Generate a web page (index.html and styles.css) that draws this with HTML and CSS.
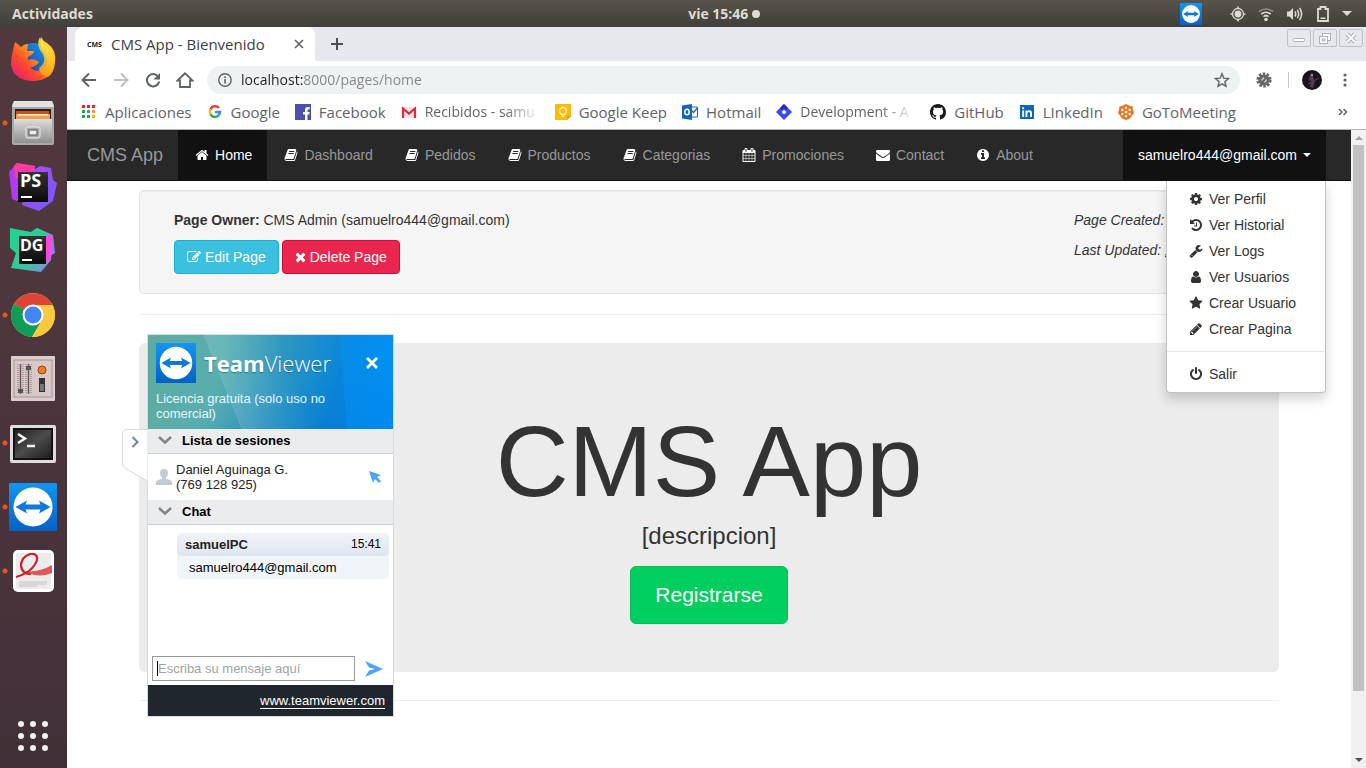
FILE: index.html
```html
<!DOCTYPE html>
<html lang="es">
<head>
<meta charset="utf-8">
<title>CMS App - Bienvenido</title>
<link rel="stylesheet" href="styles.css">
</head>
<body>
<svg class="defs" aria-hidden="true">
  <defs>
    <linearGradient id="tvBlue" x1="0" y1="0" x2="0" y2="1"><stop offset="0" stop-color="#1296f0"/><stop offset="1" stop-color="#0560c8"/></linearGradient>
    <symbol id="teamviewer" viewBox="0 0 48 48"><rect width="48" height="48" rx="1" fill="url(#tvBlue)"/><circle cx="24" cy="24" r="19.500" fill="#fff"/><path d="M6.500 24 18 17.500 16.500 21.500h15L30 17.500 41.500 24 30 30.500l1.500-4h-15l1.500 4z" fill="#0f78d8"/></symbol>
    <symbol id="home" viewBox="0 0 1792 1792"><path d="M1472 992v480q0 26-19 45t-45 19h-384v-384h-256v384h-384q-26 0-45-19t-19-45v-480q0-1 .5-3t.5-3l575-474 575 474q1 2 1 6zm223-69l-62 74q-8 9-21 11h-3q-13 0-21-7l-692-577-692 577q-12 8-24 7-13-2-21-11l-62-74q-8-10-7-23.500t11-21.500l719-599q32-26 76-26t76 26l244 204v-195q0-14 9-23t23-9h192q14 0 23 9t9 23v408l219 182q10 8 11 21.500t-7 23.500z"/></symbol>
    <symbol id="book" viewBox="0 0 1792 1792"><path d="M1703 478q40 57 18 129l-275 906q-19 64-76.500 107.500t-122.500 43.500h-923q-77 0-148.500-53.500t-99.500-131.500q-24-67-2-127 0-4 3-27t4-37q1-8-3-21.500t-3-19.500q2-11 8-21t16.500-23.500 16.500-23.500q23-38 45-91.500t30-91.500q3-10 .5-30t-.5-28q3-11 17-28t17-23q21-36 42-92t25-90q1-9-2.500-32t.5-28q4-13 22-30.500t22-22.500q19-26 42.500-84.500t27.500-96.500q1-8-3-25.500t-2-26.500q2-8 9-18t18-23 17-21q8-12 16.500-30.500t15-35 16-36 19.500-32 26.500-23.500 36-11.500 47.500 5.500l-1 3q38-9 51-9h761q74 0 114 56t18 130l-274 906q-36 119-71.500 153.500t-128.500 34.500h-869q-27 0-38 15-11 16-1 43 24 70 144 70h923q29 0 56-15.500t35-41.500l300-987q7-22 5-57 38 15 59 43zm-1064 2q-4 13 2 22.500t20 9.500h608q13 0 25.500-9.500t16.500-22.500l21-64q4-13-2-22.500t-20-9.500h-608q-13 0-25.500 9.500t-16.500 22.500zm-83 256q-4 13 2 22.500t20 9.500h608q13 0 25.500-9.500t16.500-22.500l21-64q4-13-2-22.500t-20-9.500h-608q-13 0-25.500 9.500t-16.500 22.500z"/></symbol>
    <symbol id="calendar" viewBox="0 0 1792 1792"><path d="M192 1664h288v-288h-288v288zm352 0h320v-288h-320v288zm-352-352h288v-320h-288v320zm352 0h320v-320h-320v320zm-352-384h288v-288h-288v288zm736 736h320v-288h-320v288zm-384-736h320v-288h-320v288zm768 736h288v-288h-288v288zm-384-352h320v-320h-320v320zm-352-864v-288q0-13-9.500-22.500t-22.500-9.500h-64q-13 0-22.500 9.500t-9.500 22.500v288q0 13 9.500 22.500t22.500 9.500h64q13 0 22.500-9.500t9.500-22.500zm736 864h288v-320h-288v320zm-384-384h320v-288h-320v288zm384 0h288v-288h-288v288zm32-480v-288q0-13-9.500-22.500t-22.500-9.500h-64q-13 0-22.500 9.500t-9.500 22.500v288q0 13 9.500 22.500t22.500 9.500h64q13 0 22.500-9.500t9.500-22.500zm384-64v1280q0 52-38 90t-90 38h-1408q-52 0-90-38t-38-90v-1280q0-52 38-90t90-38h128v-96q0-66 47-113t113-47h64q66 0 113 47t47 113v96h384v-96q0-66 47-113t113-47h64q66 0 113 47t47 113v96h128q52 0 90 38t38 90z"/></symbol>
    <symbol id="envelope" viewBox="0 0 1792 1792"><path d="M1792 710v794q0 66-47 113t-113 47h-1472q-66 0-113-47t-47-113v-794q44 49 101 87 362 246 497 345 57 42 92.500 65.500t94.500 48 110 24.500h2q51 0 110-24.500t94.500-48 92.500-65.500q170-123 498-345 57-39 100-87zm0-294q0 79-49 151t-122 123q-376 261-468 325-10 7-42.500 30.500t-54 38-52 32.500-57.500 27-50 9h-2q-23 0-50-9t-57.500-27-52-32.500-54-38-42.500-30.500q-91-64-262-182.500t-205-142.500q-62-42-117-115.500t-55-136.500q0-78 41.500-130t118.500-52h1472q65 0 112.500 47t47.500 113z"/></symbol>
    <symbol id="info" viewBox="0 0 1792 1792"><path d="M1152 1376v-160q0-14-9-23t-23-9h-96v-512q0-14-9-23t-23-9h-320q-14 0-23 9t-9 23v160q0 14 9 23t23 9h96v320h-96q-14 0-23 9t-9 23v160q0 14 9 23t23 9h448q14 0 23-9t9-23zm-128-896v-160q0-14-9-23t-23-9h-192q-14 0-23 9t-9 23v160q0 14 9 23t23 9h192q14 0 23-9t9-23zm640 416q0 209-103 385.500t-279.500 279.500-385.500 103-385.500-103-279.500-279.500-103-385.500 103-385.500 279.500-279.500 385.500-103 385.500 103 279.500 279.500 103 385.500z"/></symbol>
    <symbol id="cog" viewBox="0 0 1792 1792"><path d="M1152 896q0-106-75-181t-181-75-181 75-75 181 75 181 181 75 181-75 75-181zm512-109v222q0 12-8 23t-20 13l-185 28q-19 54-39 91 35 50 107 138 10 12 10 25t-9 23q-27 37-99 108t-94 71q-12 0-26-9l-138-108q-44 23-91 38-16 136-29 186-7 28-36 28h-222q-14 0-24.500-8.500t-11.500-21.500l-28-184q-49-16-90-37l-141 107q-10 9-25 9-14 0-25-11-126-114-165-168-7-10-7-23 0-12 8-23 15-21 51-66.500t54-70.500q-27-50-41-99l-183-27q-13-2-21-12.500t-8-23.500v-222q0-12 8-23t19-13l186-28q14-46 39-92-40-57-107-138-10-12-10-24 0-10 9-23 26-36 98.500-107.500t94.500-71.500q13 0 26 10l138 107q44-23 91-38 16-136 29-186 7-28 36-28h222q14 0 24.500 8.500t11.500 21.500l28 184q49 16 90 37l142-107q9-9 24-9 13 0 25 10 129 119 165 170 7 8 7 22 0 12-8 23-15 21-51 66.500t-54 70.500q26 50 41 98l183 28q13 2 21 12.500t8 23.500z"/></symbol>
    <symbol id="history" viewBox="0 0 1792 1792"><path d="M1664 896q0 156-61 298t-164 245-245 164-298 61q-172 0-327-72.500t-264-204.500q-7-10-6.500-22.500t8.500-20.500l137-138q10-9 25-9 16 2 23 12 73 95 179 147t225 52q104 0 198.500-40.500t163.500-109.500 109.500-163.500 40.500-198.500-40.500-198.500-109.500-163.500-163.500-109.500-198.500-40.500q-98 0-188 35.500t-160 101.500l137 138q31 30 14 69-17 40-59 40h-448q-26 0-45-19t-19-45v-448q0-42 40-59 39-17 69 14l130 129q107-101 244.500-156.500t284.500-55.500q156 0 298 61t245 164 164 245 61 298zm-640-288v448q0 14-9 23t-23 9h-320q-14 0-23-9t-9-23v-64q0-14 9-23t23-9h224v-352q0-14 9-23t23-9h64q14 0 23 9t9 23z"/></symbol>
    <symbol id="wrench" viewBox="0 0 1792 1792"><path d="M448 1472q0-26-19-45t-45-19-45 19-19 45 19 45 45 19 45-19 19-45zm644-420l-682 682q-37 37-90 37-52 0-91-37l-106-108q-38-36-38-90 0-53 38-91l681-681q39 98 114.500 173.500t173.500 114.500zm634-435q0 39-23 106-47 134-164.500 217.500t-258.500 83.500q-185 0-316.500-131.500t-131.500-316.500 131.500-316.500 316.500-131.500q58 0 121.500 16.500t107.500 46.500q16 11 16 28t-16 28l-293 169v224l193 107q5-3 79-48.500t135.500-81 70.500-35.500q15 0 23.500 10t8.500 25z"/></symbol>
    <symbol id="user" viewBox="0 0 1792 1792"><path d="M1536 1399q0 109-62.500 187t-150.500 78h-854q-88 0-150.500-78t-62.500-187q0-85 8.500-160.500t31.500-152 58.500-131 94-89 134.500-34.500q131 128 313 128t313-128q76 0 134.500 34.500t94 89 58.500 131 31.500 152 8.500 160.500zm-256-887q0 159-112.500 271.500t-271.500 112.500-271.500-112.500-112.500-271.500 112.500-271.500 271.500-112.500 271.500 112.500 112.500 271.500z"/></symbol>
    <symbol id="star" viewBox="0 0 1792 1792"><path d="M1728 647q0 22-26 48l-363 354 86 500q1 7 1 20 0 21-10.500 35.500t-30.500 14.500q-19 0-40-12l-449-236-449 236q-22 12-40 12-21 0-31.500-14.500t-10.500-35.500q0-6 2-20l86-500-364-354q-25-27-25-48 0-37 56-46l502-73 225-455q19-41 49-41t49 41l225 455 502 73q56 9 56 46z"/></symbol>
    <symbol id="pencil" viewBox="0 0 1792 1792"><path d="M491 1536l91-91-235-235-91 91v107h128v128h107zm523-928q0-22-22-22-10 0-17 7l-542 542q-7 7-7 17 0 22 22 22 10 0 17-7l542-542q7-7 7-17zm-54-192l416 416-832 832h-416v-416zm683 96q0 53-37 90l-166 166-416-416 166-165q36-38 90-38 53 0 91 38l235 234q37 39 37 91z"/></symbol>
    <symbol id="power" viewBox="0 0 1792 1792"><path d="M1664 896q0 156-61 298t-164 245-245 164-298 61-298-61-245-164-164-245-61-298q0-182 80.500-343t226.500-270q43-32 95.500-25t83.500 50q32 42 24.500 94.500t-49.500 84.500q-98 74-151.500 181t-53.500 228q0 104 40.500 198.500t109.500 163.500 163.500 109.500 198.500 40.500 198.500-40.500 163.500-109.500 109.500-163.500 40.500-198.500q0-121-53.500-228t-151.500-181q-42-32-49.500-84.500t24.500-94.500q31-43 84-50t95 25q146 109 226.500 270t80.500 343zm-640-768v640q0 52-38 90t-90 38-90-38-38-90v-640q0-52 38-90t90-38 90 38 38 90z"/></symbol>
    <symbol id="edit" viewBox="0 0 1792 1792"><path d="M888 1184l116-116-152-152-116 116v56h96v96h56zm440-720q-16-16-33 1l-350 350q-17 17-1 33t33-1l350-350q17-17 1-33zm80 594v190q0 119-84.500 203.500t-203.500 84.500h-832q-119 0-203.500-84.500t-84.500-203.500v-832q0-119 84.500-203.500t203.500-84.500h832q63 0 117 25 15 7 18 23 3 17-9 29l-49 49q-14 14-32 8-23-6-45-6h-832q-66 0-113 47t-47 113v832q0 66 47 113t113 47h832q66 0 113-47t47-113v-126q0-13 9-22l64-64q15-15 35-7t20 29zm-96-738l288 288-672 672h-288v-288zm444 132l-92 92-288-288 92-92q28-28 68-28t68 28l152 152q28 28 28 68t-28 68z"/></symbol>
    <symbol id="times" viewBox="192 0 1408 1792"><path d="M1490 1322q0 40-28 68l-136 136q-28 28-68 28t-68-28l-294-294-294 294q-28 28-68 28t-68-28l-136-136q-28-28-28-68t28-68l294-294-294-294q-28-28-28-68t28-68l136-136q28-28 68-28t68 28l294 294 294-294q28-28 68-28t68 28l136 136q28 28 28 68t-28 68l-294 294 294 294q28 28 28 68z"/></symbol>
  </defs>
</svg>

<header class="topbar">
  <button class="activities" type="button">Actividades</button>
  <button class="clock" type="button">vie 15:46<span class="clock-dot"></span></button>
  <div class="tray">
    <svg class="tray-tv" viewBox="0 0 48 48" role="img" aria-label="TeamViewer"><use href="#teamviewer"/></svg>
    <svg width="16" height="16" viewBox="0 0 16 16" fill="none" stroke="#dfdbd2"><circle cx="8" cy="8" r="5.500" stroke-width="1.300"/><circle cx="8" cy="8" r="3.400" fill="#dfdbd2" stroke="none"/><path d="M8 .5v2M8 13.500v2M.5 8h2M13.500 8h2" stroke-width="1.500"/></svg>
    <svg width="16" height="16" viewBox="0 0 16 16" fill="none" stroke="#dfdbd2" stroke-width="1.600"><path d="M1 5.500q7-5 14 0" stroke="#8f8b82"/><path d="M3.300 8q4.700-3.600 9.400 0M5.500 10.600q2.500-1.900 5 0"/><circle cx="8" cy="13.500" r="1.800" fill="#dfdbd2" stroke="none"/></svg>
    <svg width="18" height="16" viewBox="0 0 18 16" fill="none" stroke="#dfdbd2" stroke-width="1.500"><path d="M1 5.500h2.500L7 2v12l-3.500-3.500H1z" fill="#dfdbd2" stroke="none"/><path d="M9 5.500q1.500 2.500 0 5M11.300 3.800q2.700 4.200 0 8.400M13.600 2q4 6 0 12"/></svg>
    <svg width="14" height="18" viewBox="0 0 14 18"><path d="M2 4h2.500V2h5v2H12v12H2z" fill="none" stroke="#dfdbd2" stroke-width="1.800"/><path d="M4.500 12.500h5v1.500h-5z" fill="#dfdbd2"/></svg>
    <svg width="10" height="6" viewBox="0 0 10 6"><path d="M0 0h10L5 5z" fill="#dfdbd2"/></svg>
  </div>
</header>

<div class="desktop">
  <nav class="dock" aria-label="Aplicaciones favoritas">
    <button class="launcher" type="button" aria-label="Firefox">
      <svg viewBox="0 0 48 48">
        <defs>
          <linearGradient id="ff1" x1="1" y1="0" x2="0" y2="1"><stop offset="0" stop-color="#fff24a"/><stop offset=".35" stop-color="#ffb414"/><stop offset=".65" stop-color="#ff4a2c"/><stop offset="1" stop-color="#e8108a"/></linearGradient>
          <linearGradient id="ff2" x1="1" y1="0" x2="0" y2="1"><stop offset="0" stop-color="#12a8f8"/><stop offset="1" stop-color="#2a1b8c"/></linearGradient>
          <linearGradient id="ff3" x1="0" y1="0" x2="0" y2="1"><stop offset="0" stop-color="#fff44f"/><stop offset="1" stop-color="#ffa010"/></linearGradient>
        </defs>
        <circle cx="24" cy="25" r="17" fill="url(#ff2)"/>
        <path d="M6 7q4 3 6 5 3-3 7-3l-1 7 7 0q0 3-5 5-2 2-1 4 6-2 11 2-4 6-9 5 6 7 14 1 6-6 1-15-6-8-4-16 2 4 6 6 10 7 8 20-2 17-21 18Q4 46 2 29q0-7 4-22z" fill="url(#ff1)"/>
        <path d="M31 2q1 5 6 9 10 8 8 20-1 8-6 11-8-2-9-9 8-5 4-14-8-9-3-17z" fill="url(#ff3)" opacity=".85"/>
      </svg>
    </button>
    <button class="launcher running" type="button" aria-label="Archivos">
      <svg viewBox="0 0 48 48">
        <defs><linearGradient id="fl" x1="0" y1="0" x2="0" y2="1"><stop offset="0" stop-color="#ddd"/><stop offset="1" stop-color="#8f8f8f"/></linearGradient></defs>
        <path d="M5 2h38l2 4v38q0 2-2 2H5q-2 0-2-2V6z" fill="#a9a9a9"/><path d="M5 2h38l2 6H3z" fill="#e2e2e2"/>
        <path d="M6 10h36v13H6z" fill="#2a211c"/><path d="M7 12h33v3H7z" fill="#c8501e"/><path d="M7 15h34v8H7z" fill="#f0a04c"/><path d="M9 15h30v1.500H9z" fill="#fff0d8"/>
        <path d="M5 20h38v24H5z" fill="url(#fl)"/><rect x="17" y="28" width="14" height="11" rx="2" fill="#aaa" stroke="#eee"/><rect x="20" y="31" width="8" height="5" fill="#eee" stroke="#555"/>
      </svg>
    </button>
    <button class="launcher" type="button" aria-label="PhpStorm">
      <svg viewBox="0 0 48 48">
        <defs>
          <linearGradient id="ps" x1="0" y1="0" x2="1" y2="1"><stop offset="0" stop-color="#b44cf4"/><stop offset="1" stop-color="#7058f8"/></linearGradient>
          <linearGradient id="tile" x1="0" y1="0" x2="0" y2="1"><stop offset="0" stop-color="#333"/><stop offset="1" stop-color="#0a0a0a"/></linearGradient>
        </defs>
        <path d="M0 9 8 0l18 3-4 22-14 13-5-2z" fill="#b13bf0"/><path d="M5 3 8 0l18 3-1 8-19 4z" fill="#ff3ba0"/><path d="M23 8 31 3l11 2 2 12 4 3-4 18-14 10-17-6z" fill="url(#ps)"/>
        <rect x="9" y="9" width="30" height="30" fill="url(#tile)"/><text x="11" y="24" class="ps-mark">PS</text><path d="M12 33h11v2H12z" fill="#fff"/>
      </svg>
    </button>
    <button class="launcher" type="button" aria-label="DataGrip">
      <svg viewBox="0 0 48 48">
        <defs><linearGradient id="dg" x1="0" y1="0" x2="1" y2="1"><stop offset="0" stop-color="#22d48c"/><stop offset=".6" stop-color="#35c7a0"/><stop offset="1" stop-color="#9a7cf0"/></linearGradient></defs>
        <path d="m22 5 6-4 16 7 2 18-8 5-14-8z" fill="#9678f4"/><path d="m1 1 21 4 22 3-2 25-10 12L2 41l5-15-6-5z" fill="url(#dg)"/><path d="m22 5 6-4 14 7z" fill="#22d48c"/><path d="m34 9 10-1-3 26-7 1z" fill="#ff45e0"/>
        <rect x="10" y="9" width="27" height="28" fill="url(#tile)"/><text x="11" y="24" class="dg-mark">DG</text><path d="M13 32h10v2H13z" fill="#fff"/>
      </svg>
    </button>
    <button class="launcher running" type="button" aria-label="Chrome">
      <svg viewBox="0 0 48 48">
        <circle cx="24" cy="24" r="22" fill="#fbc93d"/><path d="M24 24 5 13A22 22 0 0 1 43.500 14H24z" fill="#dd4438"/><path d="M24 24 5 13A22 22 0 0 0 23 46l10-17z" fill="#119d58"/><path d="M24 14h19.500A22 22 0 0 1 23 46l10-17z" fill="#fbc93d"/>
        <circle cx="24" cy="24" r="10.500" fill="#fff"/><circle cx="24" cy="24" r="8.500" fill="#4285f4"/>
      </svg>
    </button>
    <button class="launcher" type="button" aria-label="Ajustes">
      <svg viewBox="0 0 48 48">
        <rect x="2" y="1" width="44" height="45" rx="1" fill="#dccdcd"/><rect x="5" y="5" width="38" height="37" fill="#d9c8c8" stroke="#a39494"/>
        <path d="M11.500 9v30M19.500 9v30" stroke="#675c5c" stroke-width="1.500"/><path d="M9 9v30M14 9v30M17 9v30M22 9v30" stroke="#8b7e7e" stroke-dasharray="1 1"/><path d="M9 34h5v4H9zM17 11h5v4h-5z" fill="#555"/>
        <circle cx="33" cy="15" r="4" fill="#ff7a14" stroke="#7b4a33"/><rect x="30" y="23" width="6" height="14" fill="#333"/><rect x="31" y="29" width="4" height="7" fill="#777"/>
      </svg>
    </button>
    <button class="launcher running" type="button" aria-label="Terminal">
      <svg viewBox="0 0 48 48">
        <defs><linearGradient id="tm" x1="0" y1="0" x2="1" y2="1"><stop offset="0" stop-color="#222"/><stop offset=".5" stop-color="#4c4c4c"/><stop offset="1" stop-color="#1c1c1c"/></linearGradient></defs>
        <rect x="1" y="6" width="46" height="38" rx="2" fill="#ddd"/><rect x="4" y="9" width="40" height="32" fill="#111"/><rect x="6" y="11" width="36" height="28" fill="url(#tm)"/><path d="m9 15 7 4.500L9 24M18 27h8" fill="none" stroke="#f3f3f3" stroke-width="2.500"/>
      </svg>
    </button>
    <button class="launcher running" type="button" aria-label="TeamViewer"><svg viewBox="0 0 48 48"><use href="#teamviewer"/></svg></button>
    <button class="launcher running" type="button" aria-label="Visor de documentos">
      <svg viewBox="0 0 48 48">
        <rect x="4" y="3" width="41" height="42" rx="5" fill="#fff"/><rect x="7" y="6" width="35" height="36" rx="2" fill="#ececec"/>
        <path d="M7 30q17-5 21-17 1-7-7-6-9 3-9 12 1 8 10 8" fill="none" stroke="#cf1f26" stroke-width="2.200"/><path d="M20 24q11 1 23-6v8q-13 5-23 0z" fill="#e05558"/><path d="M10 35h28M10 37h28M10 39h18" stroke="#c4c4c4"/>
      </svg>
    </button>
    <button class="launcher apps" type="button" aria-label="Mostrar aplicaciones">
      <svg viewBox="0 0 48 48" fill="#f2f1f0"><circle cx="12" cy="12" r="3"/><circle cx="24" cy="12" r="3"/><circle cx="36" cy="12" r="3"/><circle cx="12" cy="24" r="3"/><circle cx="24" cy="24" r="3"/><circle cx="36" cy="24" r="3"/><circle cx="12" cy="36" r="3"/><circle cx="24" cy="36" r="3"/><circle cx="36" cy="36" r="3"/></svg>
    </button>
  </nav>

  <div class="browser">
    <div class="tabstrip">
      <div class="tab">
        <svg class="favicon" width="16" height="16" viewBox="0 0 16 16"><text x="0" y="11" class="cms-mark">CMS</text></svg>
        <span class="tab-title">CMS App - Bienvenido</span>
        <button class="icon-btn tab-close" type="button" aria-label="Cerrar pestaña"><svg width="10" height="10" viewBox="0 0 10 10"><path d="m1 1 8 8M9 1 1 9" stroke="#5f6368" stroke-width="1.600"/></svg></button>
      </div>
      <button class="icon-btn new-tab" type="button" aria-label="Nueva pestaña"><svg width="12" height="12" viewBox="0 0 12 12"><path d="M6 0v12M0 6h12" stroke="#4b4f54" stroke-width="2"/></svg></button>
      <div class="window-controls">
        <button type="button" aria-label="Minimizar"><svg viewBox="0 0 12 12"><rect x=".5" y="6.500" width="11" height="3" rx="1" fill="#fff" stroke="#aeb0b5"/></svg></button>
        <button type="button" aria-label="Restaurar"><svg viewBox="0 0 12 12" fill="#fff" stroke="#aeb0b5"><rect x="3.500" y="1.500" width="8" height="7"/><rect x=".5" y="4.500" width="8" height="7"/><rect x="3" y="7" width="3" height="2"/></svg></button>
        <button type="button" aria-label="Cerrar"><svg viewBox="0 0 12 12" fill="none"><path d="m2 2 8 8M10 2l-8 8" stroke="#aeb0b5" stroke-width="4"/><path d="m2 2 8 8M10 2l-8 8" stroke="#fff" stroke-width="2"/></svg></button>
      </div>
    </div>

    <div class="toolbar">
      <div class="nav-buttons">
        <button class="icon-btn" type="button" aria-label="Atrás"><svg width="16" height="16" viewBox="0 0 16 16" fill="none" stroke="#5f6368" stroke-width="2"><path d="M15 8H2M8 1.500 1.500 8 8 14.500"/></svg></button>
        <button class="icon-btn" type="button" aria-label="Adelante"><svg width="16" height="16" viewBox="0 0 16 16" fill="none" stroke="#bdc1c6" stroke-width="2"><path d="M1 8h13M8 1.500 14.500 8 8 14.500"/></svg></button>
        <button class="icon-btn" type="button" aria-label="Recargar"><svg width="16" height="16" viewBox="0 0 16 16"><path d="M13 4.300A6.200 6.200 0 1 0 14.200 9.500" fill="none" stroke="#5f6368" stroke-width="2"/><path d="M15 1v6.500H8.500z" fill="#5f6368"/></svg></button>
        <button class="icon-btn" type="button" aria-label="Inicio"><svg width="18" height="18" viewBox="0 0 18 18"><path d="M1.500 9.500 9 2.300l7.500 7.200H14V16H4V9.500z" fill="none" stroke="#5f6368" stroke-width="1.800"/></svg></button>
      </div>
      <div class="omnibox">
        <svg width="14" height="14" viewBox="0 0 14 14"><circle cx="7" cy="7" r="6.200" fill="none" stroke="#5f6368" stroke-width="1.400"/><path d="M6.200 6h1.600v4.500H6.200zM6.200 3.300h1.600v1.600H6.200z" fill="#5f6368"/></svg>
        <input class="url" type="text" aria-label="Dirección" value="localhost:8000/pages/home">
        <button class="icon-btn" type="button" aria-label="Añadir a marcadores"><svg width="16" height="16" viewBox="0 0 16 16"><path d="m8 1.800 1.800 4.400 4.700.4-3.600 3.100 1.100 4.600L8 11.800l-4 2.500 1.100-4.600L1.500 6.600l4.700-.4z" fill="none" stroke="#5f6368" stroke-width="1.400"/></svg></button>
      </div>
      <div class="tool-right">
        <button class="icon-btn" type="button" aria-label="Extensión"><svg width="16" height="16" viewBox="0 0 16 16"><circle cx="8" cy="8" r="6.300" fill="none" stroke="#666" stroke-width="2.600" stroke-dasharray="2.500 1.450"/><circle cx="8" cy="8" r="5.600" fill="#666"/><path d="m5 7.500 2.500-2.500 1 1.500L6 9zM8 9.500 10.500 7l.8 1.300L9 11z" fill="#c4c4c4"/></svg></button>
        <span class="divider"></span>
        <button class="icon-btn" type="button" aria-label="Perfil"><svg width="20" height="20" viewBox="0 0 20 20"><circle cx="10" cy="10" r="10" fill="#17151a"/><path d="M9 3q3 0 2 4l2 4-2 7-3-1 1-7-3 1z" fill="#4a4050"/><path d="m6 14 11-6" stroke="#6a3048" stroke-width="1.200"/><path d="M9 4h2v2H9z" fill="#a2909c"/></svg></button>
        <button class="icon-btn" type="button" aria-label="Menú"><svg width="4" height="14" viewBox="0 0 4 14" fill="#5f6368"><circle cx="2" cy="2" r="1.600"/><circle cx="2" cy="7" r="1.600"/><circle cx="2" cy="12" r="1.600"/></svg></button>
      </div>
    </div>

    <nav class="bookmarks" aria-label="Marcadores">
      <a href="#"><svg viewBox="0 0 16 16"><path d="M1 1h3v3H1zM6 1h3v3H6zM11 1h3v3h-3z" fill="#e8202e"/><path d="M1 6h3v3H1zM1 11h3v3H1z" fill="#21a453"/><path d="M6 6h3v3H6z" fill="#4285f4"/><path d="M11 6h3v3h-3z" fill="#f7a018"/><path d="M6 11h3v3H6z" fill="#21a453"/><path d="M11 11h3v3h-3z" fill="#f7b518"/></svg><span>Aplicaciones</span></a>
      <a href="#"><svg viewBox="0 0 16 16" fill="none" stroke-width="2.500"><path d="M12 4A5 5 0 0 0 3.500 5.600" stroke="#ea4335"/><path d="M3.500 5.600a5 5 0 0 0 0 4.800" stroke="#fbbc05"/><path d="M3.500 10.400a5 5 0 0 0 7.800 1.300" stroke="#34a853"/><path d="M11.300 11.700Q12.900 10 12.900 8H8" stroke="#4285f4"/></svg><span>Google</span></a>
      <a href="#"><svg viewBox="0 0 16 16"><path d="M0 0h16v16H0z" fill="#4a4fb0"/><path d="M10 16v-5.500H8V8h2V6q0-3 3-3h1.700v2.300h-1.200q-1 0-1 1V8h2.200l-.4 2.500h-1.800V16z" fill="#fff"/></svg><span>Facebook</span></a>
      <a href="#"><svg viewBox="0 0 16 16"><path d="M1 3h14v11H1z" fill="#e8e6e6"/><path d="M2 14V4.500l6 5 6-5V14" fill="none" stroke="#dd2b39" stroke-width="2.200"/></svg><span class="truncated">Recibidos - samu</span></a>
      <a href="#"><svg viewBox="0 0 16 16"><path d="M0 0h16v12l-4 4H0z" fill="#fbbc04"/><path d="M12 16v-4h4z" fill="#f29900"/><path d="M6.500 10.500Q4.500 9 4.500 7a3.500 3.500 0 0 1 7 0q0 2-2 3.500zM6.500 12.500h3" fill="none" stroke="#fff3c8" stroke-width="1.400"/></svg><span>Google Keep</span></a>
      <a href="#"><svg viewBox="0 0 16 16"><path d="M8 3h7.500v10H8z" fill="#fff" stroke="#1565c0"/><path d="m8 5 3.500 3.500L15.500 4" fill="none" stroke="#1565c0" stroke-width="1.300"/><path d="M0 1.500 10 0v16L0 14.500z" fill="#1565c0"/><ellipse cx="5" cy="8" rx="2.200" ry="2.800" fill="none" stroke="#fff" stroke-width="1.500"/></svg><span>Hotmail</span></a>
      <a href="#"><svg viewBox="0 0 16 16"><path d="m8 0 8 8-8 8-8-8z" fill="#3b49f2"/><path d="m8 0-4 4 4 4 4-4z" fill="#2430c8"/><path d="m8 5.500 2.500 2.500L8 10.500 5.500 8z" fill="#fff"/></svg><span class="truncated">Development - A</span></a>
      <a href="#"><svg viewBox="0 0 16 16"><path fill="#191717" d="M8 0C3.580 0 0 3.580 0 8c0 3.540 2.290 6.530 5.470 7.590.4.070.55-.17.55-.38 0-.19-.01-.82-.01-1.490-2.010.37-2.530-.49-2.690-.94-.09-.23-.48-.94-.82-1.130-.28-.15-.68-.52-.01-.53.63-.01 1.080.58 1.230.82.72 1.210 1.870.87 2.330.66.07-.52.28-.87.51-1.070-1.780-.2-3.640-.89-3.640-3.950 0-.87.310-1.590.82-2.150-.08-.2-.36-1.020.08-2.120 0 0 .67-.21 2.200.82.64-.18 1.320-.27 2-.27s1.360.09 2 .27c1.530-1.040 2.200-.82 2.200-.82.44 1.100.16 1.920.08 2.120.51.56.82 1.270.82 2.150 0 3.070-1.870 3.750-3.650 3.950.29.25.54.73.54 1.480 0 1.070-.01 1.930-.01 2.200 0 .21.15.46.55.38A8.010 8.010 0 0 0 16 8c0-4.420-3.580-8-8-8z"/></svg><span>GitHub</span></a>
      <a href="#"><svg viewBox="0 0 16 16"><path d="M1 1h14v14H1z" fill="#0a66b2"/><path d="M3.200 6.500h1.900V13H3.200zM3.200 3.300h1.900v1.900H3.200zM6.500 6.500h1.800v1q.6-1.200 2.100-1.200 2.600 0 2.600 2.900V13h-1.900V9.600q0-1.700-1.200-1.700-1.500 0-1.500 1.900V13H6.500z" fill="#fff"/></svg><span>LInkedIn</span></a>
      <a href="#"><svg viewBox="0 0 16 16"><path d="m8 0 3 1.500 3.500 1L15 6l1 3-2 2.500-2 3-4 1.500-4-1.500-2-3L0 9l1-3 .5-3.500 3.500-1z" fill="#ee701e"/><g fill="#fff3d8"><circle cx="8" cy="8" r="1.500"/><circle cx="8" cy="3.800" r="1.300"/><circle cx="8" cy="12.200" r="1.300"/><circle cx="4.300" cy="5.900" r="1.300"/><circle cx="11.700" cy="5.900" r="1.300"/><circle cx="4.300" cy="10.100" r="1.300"/><circle cx="11.700" cy="10.100" r="1.300"/></g></svg><span>GoToMeeting</span></a>
      <button class="icon-btn more" type="button" aria-label="Más marcadores"><svg width="10" height="8" viewBox="0 0 10 8"><path d="m1 1 3 3-3 3M5.500 1l3 3-3 3" fill="none" stroke="#5f6368" stroke-width="1.500"/></svg></button>
    </nav>

    <div class="viewport">
      <div class="page">
        <nav class="navbar">
          <a class="brand" href="#">CMS App</a>
          <ul class="nav">
            <li class="active"><a href="#"><svg class="fa"><use href="#home"/></svg>Home</a></li>
            <li><a href="#"><svg class="fa"><use href="#book"/></svg>Dashboard</a></li>
            <li><a href="#"><svg class="fa"><use href="#book"/></svg>Pedidos</a></li>
            <li><a href="#"><svg class="fa"><use href="#book"/></svg>Productos</a></li>
            <li><a href="#"><svg class="fa"><use href="#book"/></svg>Categorias</a></li>
            <li><a href="#"><svg class="fa"><use href="#calendar"/></svg>Promociones</a></li>
            <li><a href="#"><svg class="fa"><use href="#envelope"/></svg>Contact</a></li>
            <li><a href="#"><svg class="fa"><use href="#info"/></svg>About</a></li>
          </ul>
          <div class="account">
            <button class="account-toggle" type="button" aria-expanded="true">samuelro444@gmail.com<span class="caret"></span></button>
            <ul class="dropdown">
              <li><a href="#"><svg class="fa"><use href="#cog"/></svg>Ver Perfil</a></li>
              <li><a href="#"><svg class="fa"><use href="#history"/></svg>Ver Historial</a></li>
              <li><a href="#"><svg class="fa"><use href="#wrench"/></svg>Ver Logs</a></li>
              <li><a href="#"><svg class="fa"><use href="#user"/></svg>Ver Usuarios</a></li>
              <li><a href="#"><svg class="fa"><use href="#star"/></svg>Crear Usuario</a></li>
              <li><a href="#"><svg class="fa"><use href="#pencil"/></svg>Crear Pagina</a></li>
              <li class="separator"></li>
              <li><a href="#"><svg class="fa"><use href="#power"/></svg>Salir</a></li>
            </ul>
          </div>
        </nav>

        <main class="container">
          <section class="well">
            <div>
              <p><strong>Page Owner:</strong> CMS Admin (samuelro444@gmail.com)</p>
              <div class="actions">
                <button class="btn btn-info" type="button"><svg class="fa-edit"><use href="#edit"/></svg>Edit Page</button>
                <button class="btn btn-danger" type="button"><svg class="fa-times"><use href="#times"/></svg>Delete Page</button>
              </div>
            </div>
            <div class="dates">
              <p>Page Created:</p>
              <p>Last Updated: <abbr title="Last Updated">1</abbr></p>
            </div>
          </section>
          <hr>
          <section class="jumbotron">
            <h1>CMS App</h1>
            <h3>[descripcion]</h3>
            <button class="btn-register" type="button">Registrarse</button>
          </section>
          <hr>
        </main>
      </div>
      <div class="scrollbar" aria-hidden="true">
        <svg width="8" height="4" viewBox="0 0 8 4"><path d="m0 4 4-4 4 4z" fill="#a3a3a3"/></svg>
        <div class="thumb"></div>
        <svg width="8" height="4" viewBox="0 0 8 4"><path d="m0 0 4 4 4-4z" fill="#505050"/></svg>
      </div>
    </div>
  </div>
</div>

<aside class="tv-window" aria-label="TeamViewer">
  <button class="tv-handle" type="button" aria-label="Contraer panel">
    <svg width="26" height="54" viewBox="0 0 26 54"><path d="M26 .5H5Q.5.500.5 5v30q0 3 3 4.500L26 52.500z" fill="#fff" stroke="#d5dae0"/><path d="m10.500 8 5 5-5 5" fill="none" stroke="#6d84a3" stroke-width="2"/></svg>
  </button>
  <header class="tv-head">
    <div class="tv-title">
      <svg class="tv-logo" viewBox="0 0 48 48"><use href="#teamviewer"/></svg>
      <span class="tv-name"><b>Team</b>Viewer</span>
      <button class="icon-btn" type="button" aria-label="Cerrar"><svg width="14" height="14" viewBox="0 0 14 14"><path d="m2 2 10 10M12 2 2 12" stroke="#fff" stroke-width="2.800"/></svg></button>
    </div>
    <p>Licencia gratuita (solo uso no comercial)</p>
  </header>
  <h2 class="tv-section"><svg width="16" height="10" viewBox="0 0 16 10"><path d="m2 2 6 5.500L14 2" fill="none" stroke="#858585" stroke-width="2.600"/></svg>Lista de sesiones</h2>
  <div class="tv-session">
    <svg width="16" height="16" viewBox="0 0 16 16"><path d="M8 0q4 0 4 4 0 3-2 4.500V10q6 1 6 3v3H0v-3q0-2 6-3V8.500Q4 7 4 4q0-4 4-4z" fill="#c3cad3"/></svg>
    <div class="tv-peer">Daniel Aguinaga G.<br>(769 128 925)</div>
    <svg width="12" height="12" viewBox="0 0 12 12"><path d="m0 0 12 4-4 2 4 4-2 2-4-4-2 4z" fill="#4da3ff"/></svg>
  </div>
  <h2 class="tv-section"><svg width="16" height="10" viewBox="0 0 16 10"><path d="m2 2 6 5.500L14 2" fill="none" stroke="#858585" stroke-width="2.600"/></svg>Chat</h2>
  <div class="tv-chat">
    <div class="tv-message">
      <div class="tv-message-head"><strong>samuelPC</strong><time>15:41</time></div>
      <p>samuelro444@gmail.com</p>
    </div>
  </div>
  <form class="tv-compose">
    <div class="tv-field"><span class="text-cursor"></span><input type="text" aria-label="Mensaje" placeholder="Escriba su mensaje aquí"></div>
    <button class="icon-btn" type="button" aria-label="Enviar"><svg width="18" height="16" viewBox="0 0 18 16"><path d="m0 0 18 8L0 16l4-6.500L10 8 4 6.500z" fill="#4da3ff"/></svg></button>
  </form>
  <footer class="tv-foot"><a href="#">www.teamviewer.com</a></footer>
</aside>
</body>
</html>
```
FILE: styles.css
```css
* { box-sizing: border-box; }

body {
  margin: 0;
  height: 100vh;
  display: flex;
  flex-direction: column;
  overflow: hidden;
  position: relative;
  background: #fff;
  color: #333;
  font: 14px/20px "Liberation Sans", Arial, sans-serif;
}

button { font: inherit; color: inherit; border: 0; padding: 0; background: none; }
a { color: inherit; text-decoration: none; }
ul { margin: 0; padding: 0; list-style: none; }
svg { display: block; flex: none; }

.defs { position: absolute; width: 0; height: 0; }
.icon-btn { display: grid; place-items: center; }

/* System bar */
.topbar {
  flex: none;
  height: 27px;
  display: grid;
  grid-template-columns: 8fr auto 7fr;
  align-items: center;
  padding: 0 14px 0 12px;
  background: linear-gradient(#57544b, #403f3a);
  color: #dfdbd2;
  font: bold 14px/20px "Open Sans", "Noto Sans", sans-serif;
}
.activities { justify-self: start; }
.clock { display: flex; align-items: center; gap: 4px; }
.clock-dot { width: 8px; height: 8px; border-radius: 50%; background: #dfdbd2; }
.tray { justify-self: end; display: flex; align-items: center; gap: 12px; }
.tray-tv { width: 22px; height: 22px; margin-right: 16px; }

/* Dock */
.desktop { flex: 1; min-height: 0; display: flex; }
.dock {
  flex: none;
  width: 67px;
  display: flex;
  flex-direction: column;
  padding-right: 1px;
  background: linear-gradient(#52393e, #4a343b 60%, #46323a 85%, #3f3137);
}
.launcher {
  height: 64px;
  display: grid;
  place-items: center;
  background: no-repeat 2px center / 6px 6px;
}
.launcher svg { width: 48px; height: 48px; }
.running { background-image: radial-gradient(circle, #e95420 2px, transparent 3px); }
.apps { margin-top: auto; }
.ps-mark { font: bold 18px "Open Sans", sans-serif; fill: #fff; }
.dg-mark { font: bold 16px "Open Sans", sans-serif; fill: #fff; }

/* Browser chrome */
.browser {
  flex: 1;
  min-width: 0;
  display: flex;
  flex-direction: column;
  font-family: "Open Sans", "Noto Sans", sans-serif;
  font-size: 15px;
}
.tabstrip {
  flex: none;
  height: 34px;
  display: flex;
  padding-left: 8px;
  background: #e6e8ed;
}
.tab {
  width: 240px;
  display: flex;
  align-items: center;
  gap: 8px;
  padding: 0 11px 0 12px;
  border-radius: 8px 8px 0 0;
  background: #fff;
  color: #3c4043;
}
.tab-title { flex: 1; white-space: nowrap; }
.cms-mark { font: bold 7px "Open Sans", sans-serif; fill: #222; }
.new-tab { width: 44px; }
.window-controls {
  margin-left: auto;
  display: flex;
  gap: 2px;
  padding: 2px 3px;
}
.window-controls button {
  width: 24px;
  height: 18px;
  display: grid;
  place-items: center;
  border: 1px solid #bfc1c6;
  border-radius: 2px;
}
.window-controls svg { width: 12px; height: 12px; }

.toolbar {
  flex: none;
  height: 37px;
  display: flex;
  align-items: center;
  padding: 0 19px 0 6px;
}
.nav-buttons { display: flex; margin-right: 6px; }
.nav-buttons .icon-btn { width: 32px; height: 32px; }
.omnibox {
  flex: 1;
  min-width: 0;
  height: 28px;
  display: flex;
  align-items: center;
  gap: 9px;
  padding: 0 10px 0 11px;
  border-radius: 14px;
  background: #eff2f3;
}
.url {
  flex: 1;
  min-width: 0;
  padding: 0;
  border: 0;
  outline: 0;
  font: 14px/20px "Open Sans", "Noto Sans", sans-serif;
  color: transparent;
  background: linear-gradient(90deg, #202124 63px, #80868b 63px);
  background-clip: text;
}
.tool-right { display: flex; align-items: center; margin-left: 16px; }
.divider { width: 1px; height: 16px; margin: 0 13px 0 16px; background: #c5c8cc; }
.tool-right .icon-btn:last-child { margin-left: 21px; }

.bookmarks {
  flex: none;
  height: 32px;
  display: flex;
  align-items: center;
  gap: 15px;
  padding: 0 18px 4px 14px;
  border-bottom: 1px solid #b6b4b6;
  color: #5f6368;
}
.bookmarks a { display: flex; align-items: center; gap: 8px; white-space: nowrap; }
.bookmarks a svg { width: 16px; height: 16px; }
.truncated {
  width: 115px;
  font-size: 14px;
  mask-image: linear-gradient(90deg, #000 80px, transparent 115px);
}
.more { margin-left: auto; }

/* Page */
.viewport { flex: 1; min-height: 0; display: flex; background: #fff; }
.page {
  flex: 1;
  min-width: 0;
  font: 14px/20px "Liberation Sans", Arial, sans-serif;
}
.scrollbar {
  flex: none;
  width: 15px;
  display: flex;
  flex-direction: column;
  align-items: center;
  padding: 6px 0;
  gap: 5px;
  background: #f1f1f1;
}
.thumb { width: 11px; height: 90%; max-height: 546px; margin-bottom: auto; background: #c1c1c1; }

.navbar {
  height: 51px;
  display: flex;
  padding: 0 25px 0 5px;
  background: #282828;
  border-bottom: 1px solid #111;
}
.brand { padding: 15px; font-size: 18px; color: #999; white-space: nowrap; }
.nav { display: flex; }
.nav a {
  display: flex;
  align-items: center;
  padding: 15px;
  color: #999;
}
.nav .active a { color: #fff; background: #111; }
.fa { width: 14px; height: 14px; margin: 0 6px 0 2px; fill: currentColor; }
.nav .fa { fill: #fff; }
.account { position: relative; margin-left: auto; }
.account-toggle {
  display: flex;
  align-items: center;
  gap: 6px;
  padding: 15px;
  color: #fff;
  background: #111;
}
.caret { border: 4px solid transparent; border-top-color: #fff; border-bottom: 0; }
.dropdown {
  position: absolute;
  z-index: 2;
  top: 100%;
  right: 0;
  min-width: 160px;
  margin-top: 1px;
  padding: 5px 0;
  background: #fff;
  border: 1px solid #c3c3c3;
  border-top: 0;
  border-radius: 0 0 4px 4px;
  box-shadow: 0 6px 12px rgba(0, 0, 0, .18);
}
.dropdown a { display: flex; align-items: center; padding: 3px 20px; }
.dropdown .separator { height: 1px; margin: 9px 0; background: #e5e5e5; }

.container { max-width: 1170px; margin: 0 auto; padding: 9px 15px 0; }
.container p { margin: 0 0 10px; }
.container hr { margin: 20px 0 28px; border: 0; border-top: 1px solid #eee; }
.well {
  display: flex;
  justify-content: space-between;
  padding: 19px 34px;
  background: #f5f5f5;
  border: 1px solid #e3e3e3;
  border-radius: 4px;
  box-shadow: inset 0 1px 1px rgba(0, 0, 0, .05);
}
.actions { display: flex; gap: 3px; }
.btn {
  display: flex;
  align-items: center;
  gap: 4px;
  padding: 6px 12px;
  border: 1px solid;
  border-radius: 4px;
  color: #fff;
}
.btn svg { height: 14px; fill: currentColor; }
.fa-edit { width: 14px; }
.fa-times { width: 11px; }
.btn-info { background: #3cc0df; border-color: #13b2d5; }
.btn-danger { background: #e9274e; border-color: #d9063d; }
.dates { width: 170px; font-style: italic; }
.dates abbr { text-decoration: underline dotted; }

.jumbotron {
  display: flex;
  flex-direction: column;
  align-items: center;
  padding: 63px 60px 48px;
  margin-bottom: 28px;
  background: #ececec;
  border-radius: 6px;
}
.jumbotron h1 { margin: 0; font-weight: 400; font-size: 101px; line-height: 110px; }
.jumbotron h3 { margin: 6px 0 17px; font-weight: 400; font-size: 24px; line-height: 27px; }
.btn-register {
  padding: 13px 24px;
  border: 1px solid #00bf59;
  border-radius: 6px;
  background: #00cf60;
  color: #fff;
  font-size: 21px;
  line-height: 30px;
}

/* TeamViewer floating window */
.tv-window {
  position: absolute;
  z-index: 3;
  left: 147px;
  top: 334px;
  width: 247px;
  border: 1px solid #d8dce1;
  background: #fff;
  color: #222;
  font-size: 13px;
  line-height: 15px;
}
.tv-handle { position: absolute; left: -26px; top: 94px; }
.tv-head {
  height: 94px;
  padding: 8px;
  color: #fff;
  background:
    linear-gradient(68deg, transparent 33%, rgba(255, 255, 255, .12) 33%, transparent 60%),
    linear-gradient(86deg, transparent 79%, rgba(0, 150, 255, .35) 79%),
    linear-gradient(160deg, transparent 55%, rgba(0, 100, 190, .3)),
    linear-gradient(105deg, #5fab9f, #58aeb0 30%, #2c96c0 52%, #0a86da 75%, #0090fa);
}
.tv-title { display: flex; align-items: center; gap: 8px; }
.tv-logo { width: 40px; height: 40px; }
.tv-name {
  flex: 1;
  font: 300 22px/32px "Open Sans", "Noto Sans", sans-serif;
  text-shadow: 0 1px 1px rgba(0, 50, 100, .4);
}
.tv-name b { font-weight: 700; }
.tv-title .icon-btn { width: 26px; height: 26px; }
.tv-head p { margin: 8px 40px 0 0; color: #e8f5fb; }
.tv-section {
  display: flex;
  align-items: center;
  gap: 9px;
  height: 25px;
  margin: 0;
  padding: 0 9px 2px;
  background: #ebecee;
  border-bottom: 1px solid #ccd0d4;
  color: #000;
  font-size: 13px;
}
.tv-session {
  display: flex;
  align-items: center;
  gap: 4px;
  height: 46px;
  padding: 0 12px 0 8px;
}
.tv-peer { flex: 1; }
.tv-chat { height: 131px; padding: 8px 4px 0 29px; }
.tv-message { background: #f0f5fa; border-radius: 5px; color: #000; }
.tv-message-head {
  display: flex;
  justify-content: space-between;
  padding: 4px 8px;
  border-radius: 5px;
  background: linear-gradient(#f0f4f9, #dfe5ef);
}
.tv-message strong { color: #222; }
.tv-message time { font-size: 12px; }
.tv-message p { margin: 0; padding: 4px 12px; }
.tv-compose { display: flex; align-items: center; gap: 10px; padding: 0 4px 4px; }
.tv-field {
  width: 203px;
  height: 25px;
  display: flex;
  align-items: center;
  padding: 0 4px;
  border: 1px solid #999;
}
.text-cursor { width: 1px; height: 15px; background: #000; }
.tv-field input {
  flex: 1;
  min-width: 0;
  padding: 0;
  border: 0;
  outline: 0;
  font: inherit;
}
.tv-field input::placeholder { color: #a2a2a2; }
.tv-foot {
  height: 31px;
  display: flex;
  align-items: center;
  justify-content: flex-end;
  padding: 1px 8px 0;
  background: #20262e;
  color: #fff;
}
.tv-foot a { border-bottom: 1px solid #fff; line-height: 14px; }
```
